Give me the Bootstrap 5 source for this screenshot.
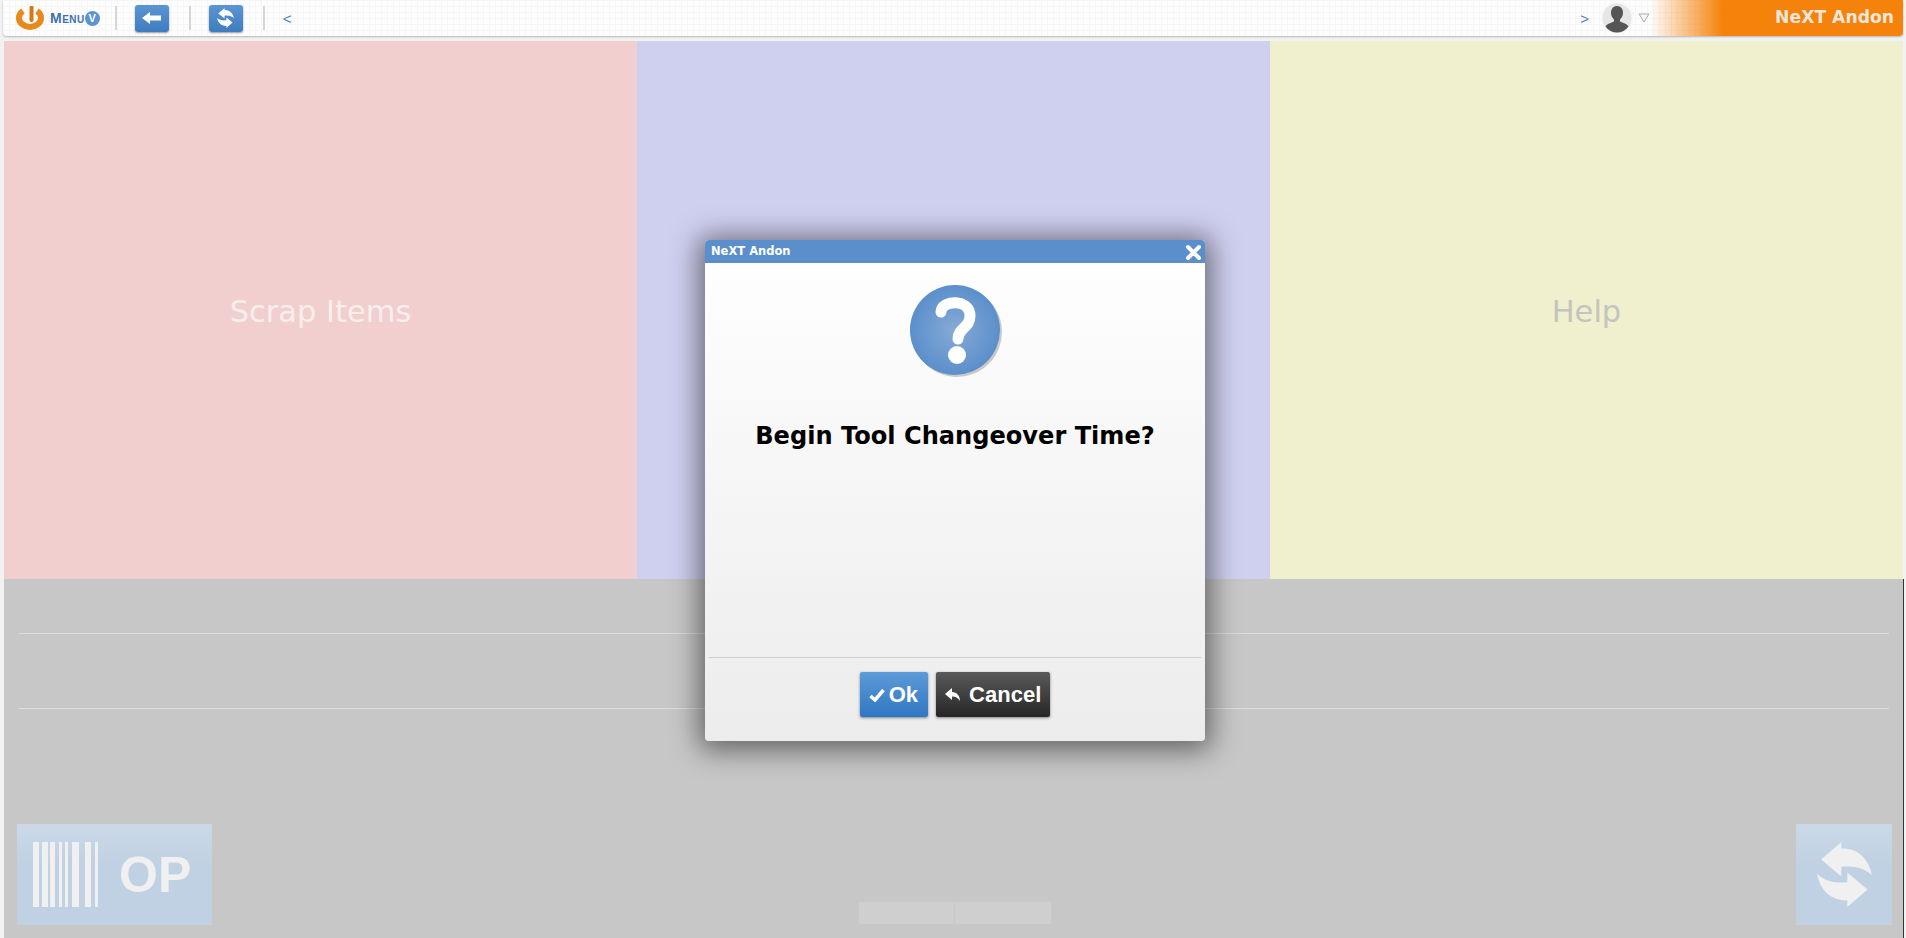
<!DOCTYPE html>
<html lang="en">
<head>
    <meta charset="UTF-8">
    <title>NeXT Andon</title>
    <link href="https://cdn.jsdelivr.net/npm/bootstrap@5.3.0/dist/css/bootstrap.min.css" rel="stylesheet">
    <style>
        html, body {
            height: 100%;
            overflow: hidden;
        }
        body {
            background-color: #f2f2f2;
            font-family: "DejaVu Sans", sans-serif;
        }
        .page-wrap {
            height: 938px;
            padding: 0 3px 0 4px;
        }
        .top-bar {
            height: 36px;
            margin: 0 0 5px -1px;
            background-color: #fefefe;
            background-image:
                linear-gradient(#f6f6f6 1px, transparent 1px),
                linear-gradient(90deg, #f6f6f6 1px, transparent 1px);
            background-size: 6px 6px;
            border-radius: 0 0 4px 4px;
            box-shadow: 0 1px 2px rgba(0,0,0,0.25);
            padding-left: 13px;
        }
        .menu-word {
            font-family: "Liberation Sans", sans-serif;
            font-weight: bold;
            font-size: 14px;
            font-variant: small-caps;
            color: #3f6fb0;
            letter-spacing: 0.5px;
            margin: 0 0 0 6px;
        }
        .menu-v {
            width: 15px;
            height: 15px;
            border-radius: 50%;
            background: #5b93d3;
            color: #fff;
            font: bold 11px/15px "Liberation Sans", sans-serif;
            text-align: center;
        }
        .bar-sep {
            width: 2px;
            height: 24px;
            background: #d6d6d6;
        }
        .first-sep {
            margin-left: 15px;
        }
        .bar-btn {
            width: 34px;
            height: 27px;
            margin: 0 20px 0 18px;
            padding: 0;
            border: 0;
            border-radius: 3px;
            background: linear-gradient(#5a95d4, #3f7dbf);
            box-shadow: 0 1px 2px rgba(0,0,0,0.4);
        }
        .bar-arrow {
            color: #4b80c0;
            font: 15px "Liberation Sans", sans-serif;
        }
        .back-arrow {
            margin-left: 18px;
        }
        .user-icon {
            margin-left: 11px;
        }
        .brand-end {
            width: 253px;
            height: 36px;
            padding-right: 9px;
            background: linear-gradient(90deg, rgba(245,130,10,0) 0, #f5820a 73px);
            border-radius: 0 0 4px 0;
            color: #f2e6da;
            font-weight: bold;
            font-size: 17.2px;
        }
        .tile-row {
            height: 538px;
        }
        .tile {
            font-size: 30.500px;
            padding-top: 3px;
        }
        .tile-red { background: #f2cfcf; color: #f7eeee; }
        .tile-blue { background: #cfcff0; color: #ececf8; }
        .tile-yellow { background: #f0f0cf; color: #c4c4bc; }
        .lower-area {
            height: 359px;
            background: #c7c7c7;
            padding: 54px 14px 13px 15px;
            box-shadow: 1px 0 0 #333;
        }
        .lower-rule {
            height: 1px;
            background: #dedede;
            margin-bottom: 74px;
        }
        .lower-btns {
            display: grid;
            grid-template-columns: 1fr auto 1fr;
            align-items: end;
            margin: 0 -3px 0 -2px;
            padding-top: 41px;
        }
        .side-btn {
            height: 101px;
            background: linear-gradient(#cbd9e7, #c0d1e3 40%);
            color: #f0f0f0;
        }
        .op-btn {
            width: 195px;
            gap: 21px;
            padding-left: 16px;
            font: bold 50px "Liberation Sans", sans-serif;
        }
        .refresh-btn {
            width: 96px;
            justify-self: end;
        }
        .mid-control {
            width: 192px;
            height: 22px;
            margin-bottom: 1px;
            background: #cfcfcf;
            box-shadow: 0 0 2px #cacaca;
        }
        .mid-control i {
            width: 1px;
            background: #c8c8c8;
        }
        .ask-dialog {
            position: absolute;
            left: 705px;
            top: 240px;
            width: 500px;
            height: 501px;
            border-radius: 4px;
            background: linear-gradient(#ffffff, #ececec);
            box-shadow: 0 3px 28px 6px rgba(0,0,0,0.5);
        }
        .ask-head {
            height: 23px;
            background: #5b8fcb;
            border-radius: 4px 4px 0 0;
            color: #fff;
            font-size: 11.500px;
            font-weight: bold;
            padding: 1px 3px 0 6px;
        }
        .ask-body {
            padding-top: 21px;
        }
        .ask-text {
            font-size: 24.100px;
            font-weight: bold;
            color: #000;
            line-height: 30px;
            margin-top: 41px;
        }
        .ask-foot {
            height: 84px;
            margin: 0 4px;
            padding-top: 14px;
            border-top: 1px solid #cfcfcf;
        }
        .ask-btn {
            height: 45px;
            padding: 0 9px;
            border: 0;
            border-radius: 2px;
            color: #fff;
            font: bold 22px "Liberation Sans", sans-serif;
            box-shadow: 0 1px 3px rgba(0,0,0,0.45);
        }
        .ask-ok { background: linear-gradient(#5e9ad8, #2f77c2); padding-right: 10px; }
        .ask-cancel { background: linear-gradient(#5a5a5a, #262626); }
    </style>
</head>
<body>

<div class="page-wrap d-flex flex-column">

    <!-- Top bar -->
    <div class="top-bar d-flex align-items-center">
        <svg width="28" height="24" viewBox="0 0 28 24">
            <path d="M7 5 A11 9 0 1 0 21 5" fill="none" stroke="#e8891c" stroke-width="6"/>
            <path d="M15.500 1.500 V14" fill="none" stroke="#d07c14" stroke-width="4" stroke-linecap="round"/>
        </svg>
        <span class="menu-word">Menu</span>
        <span class="menu-v">V</span>
        <span class="bar-sep first-sep"></span>
        <button class="bar-btn d-flex align-items-center justify-content-center">
            <svg width="20" height="14" viewBox="0 0 20 14"><path d="M0 7 L8 1 V4.500 H19 V9.500 H8 V13 Z" fill="#fff"/></svg>
        </button>
        <span class="bar-sep"></span>
        <button class="bar-btn d-flex align-items-center justify-content-center">
            <svg width="17" height="20" viewBox="170 122 165 196"><path d="M182 175 L243 122 V142 C290 140 325 170 335 222 C315 200 280 192 243 197 V226 Z M322 265 L261 318 V298 C214 300 179 270 170 218 C190 240 224 248 261 243 V214 Z" fill="#fff"/></svg>
        </button>
        <span class="bar-sep"></span>
        <span class="bar-arrow back-arrow">&lt;</span>

        <span class="bar-arrow ms-auto">&gt;</span>
        <svg class="user-icon" width="34" height="34" viewBox="0 0 34 34">
            <circle cx="17" cy="17" r="15.500" fill="#e6e6e6" stroke="#f8f8f8" stroke-width="2"/>
            <path d="M17 5 c4 0 6 3 6 7 c0 3 -1.500 5 -3 6.500 v2 c3 1.500 7 2 8.500 5 a14 14 0 0 1 -23 0 c1.500 -3 5.500 -3.500 8.500 -5 v-2 c-1.500 -1.500 -3 -3.500 -3 -6.500 c0 -4 2 -7 6 -7 Z" fill="#555"/>
        </svg>
        <svg class="ms-1" width="12" height="10" viewBox="0 0 12 10"><path d="M1 1 H11 L6 9 Z" fill="#f6f6f6" stroke="#aaa"/></svg>
        <div class="brand-end d-flex align-items-center justify-content-end">NeXT Andon</div>
    </div>

    <!-- Tiles -->
    <div class="row g-0 tile-row">
        <div class="col-4 tile tile-red d-flex align-items-center justify-content-center">Scrap Items</div>
        <div class="col-4 tile tile-blue d-flex align-items-center justify-content-center">Tool Change</div>
        <div class="col-4 tile tile-yellow d-flex align-items-center justify-content-center">Help</div>
    </div>

    <!-- Lower area -->
    <div class="lower-area">
        <div class="lower-rule"></div>
        <div class="lower-rule"></div>
        <div class="lower-btns">
            <div class="side-btn op-btn d-flex align-items-center">
                <svg width="65" height="65" viewBox="0 0 65 65" fill="#f0f0f0">
                    <rect x="0" y="0" width="6" height="65"/><rect x="9" y="0" width="6" height="65"/>
                    <rect x="17" y="0" width="5" height="65"/><rect x="26" y="0" width="3" height="65"/>
                    <rect x="32" y="0" width="3" height="65"/><rect x="39" y="0" width="7" height="65"/>
                    <rect x="52" y="0" width="6" height="65"/><rect x="62" y="0" width="3" height="65"/>
                </svg>
                <span>OP</span>
            </div>
            <div class="mid-control d-flex justify-content-center"><i></i></div>
            <div class="side-btn refresh-btn d-flex align-items-center justify-content-center">
                <svg width="55" height="65" viewBox="170 122 165 196"><path d="M182 175 L243 122 V142 C290 140 325 170 335 222 C315 200 280 192 243 197 V226 Z M322 265 L261 318 V298 C214 300 179 270 170 218 C190 240 224 248 261 243 V214 Z" fill="#f0f0f0"/></svg>
            </div>
        </div>
    </div>
</div>

<!-- Confirm dialog -->
<div class="ask-dialog d-flex flex-column">
    <div class="ask-head d-flex align-items-center justify-content-between">
        <span>NeXT Andon</span>
        <svg width="17" height="17" viewBox="0 0 17 17"><path d="M3 3 L14 14 M14 3 L3 14" stroke="#fff" stroke-width="4" stroke-linecap="round"/></svg>
    </div>
    <div class="ask-body flex-grow-1 text-center">
        <svg width="96" height="96" viewBox="0 0 96 96">
            <defs>
                <radialGradient id="askFill"><stop offset="0" stop-color="#86aad6"/><stop offset="1" stop-color="#5b8fcb"/></radialGradient>
            </defs>
            <circle cx="50" cy="48" r="45" fill="#999" opacity="0.5"/>
            <circle cx="48" cy="46" r="45" fill="url(#askFill)"/>
            <path d="M34 28 C34 16 63 14 63 32 C63 44 51 44 51 55" fill="none" stroke="#fff" stroke-width="11" stroke-linecap="round"/>
            <circle cx="50" cy="71" r="9" fill="#fff"/>
        </svg>
        <div class="ask-text">Begin Tool Changeover Time?</div>
    </div>
    <div class="ask-foot d-flex justify-content-center gap-2">
        <button class="ask-btn ask-ok d-flex align-items-center gap-1">
            <svg width="16" height="14" viewBox="0 0 16 14"><path d="M1.500 8 L6 12 L14.500 2" fill="none" stroke="#fff" stroke-width="3.500"/></svg>Ok
        </button>
        <button class="ask-btn ask-cancel d-flex align-items-center gap-2">
            <svg width="16" height="14" viewBox="0 0 16 14"><path d="M0 6 L7 0 V4 C12 4 15 8 15 13 C13 10 11 8.500 7 8.500 V12 Z" fill="#fff"/></svg>Cancel
        </button>
    </div>
</div>

<script src="https://cdn.jsdelivr.net/npm/bootstrap@5.3.0/dist/js/bootstrap.bundle.min.js"></script>
</body>
</html>
